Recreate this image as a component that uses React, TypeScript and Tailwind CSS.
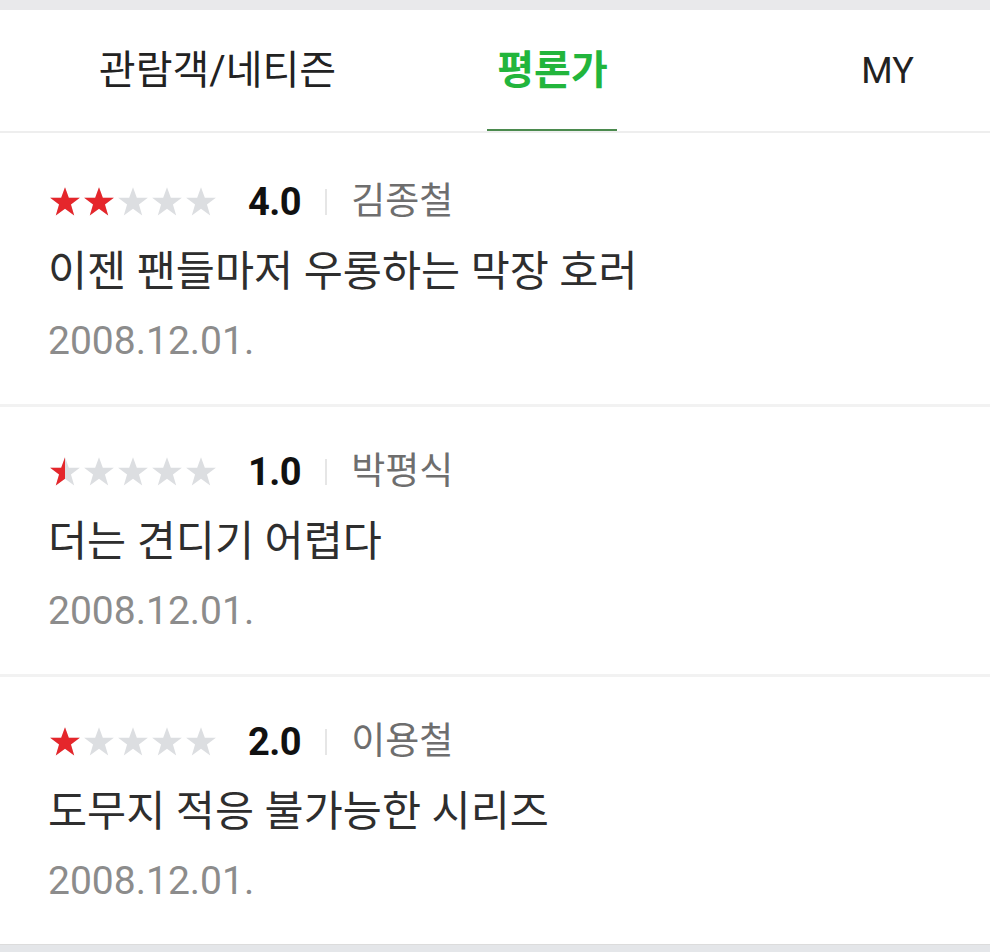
import React from 'react'

type Review = { score: number; name: string; text: string; date: string }

const REVIEWS: Review[] = [
  { score: 4.0, name: '김종철', text: '이젠 팬들마저 우롱하는 막장 호러', date: '2008.12.01.' },
  { score: 1.0, name: '박평식', text: '더는 견디기 어렵다', date: '2008.12.01.' },
  { score: 2.0, name: '이용철', text: '도무지 적응 불가능한 시리즈', date: '2008.12.01.' },
]

const FONT = "font-['Roboto','Noto_Sans_CJK_KR',sans-serif]"

function Star({ color }: { color: string }) {
  return (
    <svg viewBox="0 0 24 24" className="w-[34px] h-[34px]" fill={color}>
      <polygon points="12,1.5 14.7,9 22.5,9 16.2,13.7 18.5,21.5 12,16.8 5.5,21.5 7.8,13.7 1.5,9 9.3,9" />
    </svg>
  )
}

function Stars({ score }: { score: number }) {
  // 10점 만점 -> 별 5개
  const filled = score / 2
  return (
    <div className="relative flex">
      {[0, 1, 2, 3, 4].map((i) => (
        <Star key={i} color="#dcdee1" />
      ))}
      <div className="absolute left-0 top-0 overflow-hidden flex" style={{ width: filled * 34 }}>
        {[0, 1, 2, 3, 4].map((i) => (
          <div key={i} className="shrink-0">
            <Star color="#e5262b" />
          </div>
        ))}
      </div>
    </div>
  )
}

function ReviewRow({ review, first }: { review: Review; first?: boolean }) {
  return (
    <div className={`px-[48px] ${first ? 'pt-[44px]' : 'pt-[40px]'} pb-[38px]`}>
      <div className="flex items-center h-[50px]">
        <Stars score={review.score} />
        <span className="ml-[30px] text-[38px] font-bold text-[#111] tracking-[-0.5px]">{review.score.toFixed(1)}</span>
        <span className="mx-[24px] w-[2px] h-[26px] bg-[#e6e6e6]" />
        <span className="text-[37px] text-[#6e6e6e]">{review.name}</span>
      </div>
      <div className="mt-[20px] h-[50px] flex items-center text-[42.5px] text-[#2e2e2e] whitespace-nowrap">{review.text}</div>
      <div className="mt-[19px] h-[50px] flex items-center text-[39px] text-[#8c8c8c]">{review.date}</div>
    </div>
  )
}

export default function App() {
  return (
    <div className={`w-[990px] h-[952px] bg-white overflow-hidden flex flex-col ${FONT}`}>
      <div className="h-[10px] bg-[#e9e9eb] shrink-0" />

      {/* 탭 */}
      <div className="h-[123px] shrink-0 flex pl-[50px] border-b-[2px] border-[#eeeeee] overflow-hidden">
        <div className="w-[335px] shrink-0 flex items-center justify-center text-[40px] text-[#222] whitespace-nowrap">관람객/네티즌</div>
        <div className="w-[335px] shrink-0 relative flex items-center justify-center text-[40px] font-bold text-[#22b53c]">
          평론가
          <div className="absolute bottom-[-2px] left-[102px] w-[130px] h-[4px] bg-[#4b8a4e]" />
        </div>
        <div className="w-[335px] shrink-0 flex items-center justify-center text-[36px] text-[#222]">MY</div>
      </div>

      {REVIEWS.map((r, i) => (
        <div key={i}>
          {i > 0 && <div className="h-[3px] bg-[#f2f2f2]" />}
          <ReviewRow review={r} first={i === 0} />
        </div>
      ))}

      <div className="flex-1 bg-[#e4e6e9] border-t border-[#dcdcdc]" />
    </div>
  )
}
